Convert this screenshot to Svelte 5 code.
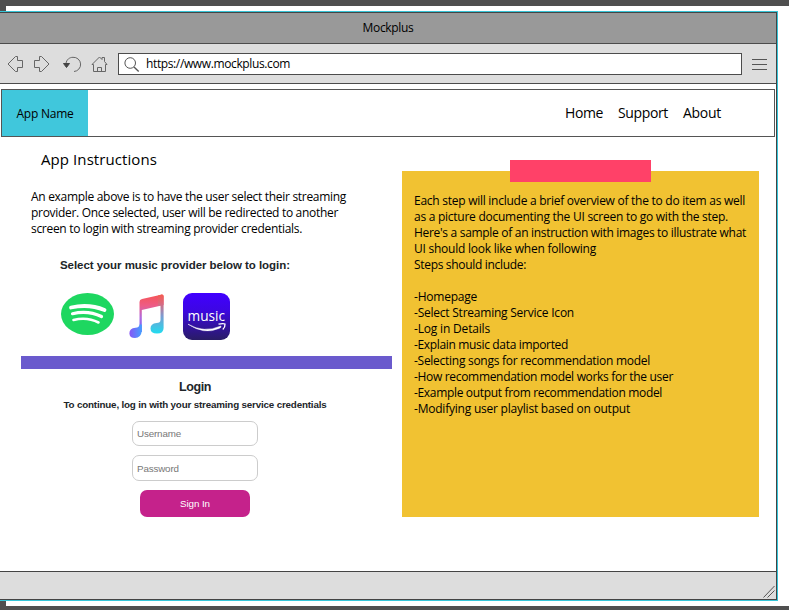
<script>
  const intro = [
    ['An example above is to have the user select their streaming', 315],
    ['provider. Once selected, user will be redirected to another', 307],
    ['screen to login with streaming provider credentials.', 271]
  ];
  const note = [
    ['Each step will include a brief overview of the to do item as well', 331],
    ['as a picture documenting the UI screen to go with the step.', 314],
    ["Here's a sample of an instruction with images to illustrate what", 332],
    ['UI should look like when following', 182],
    ['Steps should include:', 112],
    ['', 0],
    ['-Homepage', 63],
    ['-Select Streaming Service Icon', 160],
    ['-Log in Details', 76],
    ['-Explain music data imported', 154],
    ['-Selecting songs for recommendation model', 236],
    ['-How recommendation model works for the user', 259],
    ['-Example output from recommendation model', 248],
    ['-Modifying user playlist based on output', 216]
  ];

  // Tracks a line of text so that it spans the given width.
  function fit(node, width) {
    const count = node.textContent.length;
    if (!count) return;
    const natural = node.getBoundingClientRect().width;
    node.style.letterSpacing = `${(width - natural) / count}px`;
  }
</script>

<div class="stage">
  <div class="window">
    <header class="title"><span use:fit={51}>Mockplus</span></header>
    <div class="toolbar">
      <svg class="controls" width="118" height="39" viewBox="0 44 118 39" fill="none" stroke="#666" stroke-width="1">
        <path d="M8 64 15.5 56.5H17.5V60.5H22.5V67.5H17.5V71.5H15.5Z" />
        <path d="M49 64 41.5 56.5H39.5V60.5H34.5V67.5H39.5V71.5H41.5Z" />
        <path d="M66 63.5C66.5 59.5 69.5 57.3 73 57.3A7 7 0 0 1 74 71.5" />
        <path d="M63.5 63.5H69.5L66.5 67.5Z" fill="#444" stroke="#444" />
        <path d="M92 64.5 99.5 57 102 59.5V57.5H104.5V61.5L107 64.5H105.5V71.5H93.5V64.5ZM97.5 71.5V67.5H101.5V71.5" />
      </svg>
      <div class="address">
        <svg width="27" height="20" viewBox="0 0 27 20" fill="none" stroke="#555">
          <circle cx="9.2" cy="8" r="5.3" /><path d="M13 12 17.7 16.5" stroke-width="1.4" />
        </svg>
        <span use:fit={144}>https://www.mockplus.com</span>
      </div>
      <div class="menu"><i></i><i></i><i></i></div>
    </div>
    <nav>
      <div class="brand"><span use:fit={57}>App Name</span></div>
      <div class="links">
        <span use:fit={38}>Home</span><span use:fit={50}>Support</span><span use:fit={38}>About</span>
      </div>
    </nav>
    <main>
      <section class="left">
        <h1><span use:fit={116}>App Instructions</span></h1>
        <div class="intro">
          {#each intro as [text, width]}<div class="line"><span use:fit={width}>{text}</span></div>{/each}
        </div>
        <h2><span use:fit={230}>Select your music provider below to login:</span></h2>
        <div class="logos">
          <svg width="53" height="42" viewBox="0 0 53 42">
            <ellipse cx="26.5" cy="21" rx="26.5" ry="21" fill="#1ed760" />
            <g fill="none" stroke="#fff" stroke-linecap="round">
              <path d="M10 14.5Q28 10.5 43.5 17" stroke-width="3.8" />
              <path d="M11.5 20.7Q27 17 40.5 23.5" stroke-width="3.2" />
              <path d="M12.5 27Q26 23.5 37.5 29.5" stroke-width="2.6" />
            </g>
          </svg>
          <svg width="35" height="45" viewBox="0 0 35 45">
            <defs>
              <linearGradient id="note-top" x1="0" y1="0" x2="0" y2="1">
                <stop offset="0" stop-color="#f65455" /><stop offset=".3" stop-color="#ed5c87" />
                <stop offset=".62" stop-color="#b06be0" /><stop offset="1" stop-color="#6164ff" />
              </linearGradient>
              <linearGradient id="note-right" x1="0" y1="0" x2="0" y2="1">
                <stop offset="0" stop-color="#f45b50" /><stop offset=".22" stop-color="#dc687c" />
                <stop offset=".55" stop-color="#7d9bd0" /><stop offset="1" stop-color="#20dcf0" />
              </linearGradient>
              <linearGradient id="note-ball"><stop offset="0" stop-color="#8755f5" /><stop offset="1" stop-color="#43a0ff" /></linearGradient>
            </defs>
            <path d="M10.5 8Q10.5 5.4 13 4.9L32 .7Q34.6.2 34.6 2.3V11L12.8 16V38H10.5Z" fill="url(#note-top)" />
            <path d="M29 1.4 32 .7Q34.6.2 34.6 2.3V34Q34.6 39.5 28 39.5 21.5 39.5 21.5 34.5 21.5 29.5 27.5 29 31.5 28.8 31.5 26V11.5L29 12Z" fill="url(#note-right)" />
            <path d="M12.8 35V37Q12 44 6 44 .6 44 .4 39.5 .2 34.5 6.5 33.8 10.5 33.4 10.5 30.5H12.8Z" fill="url(#note-ball)" />
          </svg>
          <svg width="47" height="47" viewBox="0 0 47 47">
            <defs><linearGradient id="amazon" x1="0" y1="0" x2="0" y2="1">
              <stop offset="0" stop-color="#4100ff" /><stop offset=".35" stop-color="#3d06e5" /><stop offset="1" stop-color="#291c65" />
            </linearGradient></defs>
            <rect width="47" height="47" rx="9" fill="url(#amazon)" />
            <text x="4.5" y="27.5" textLength="37.5" lengthAdjust="spacingAndGlyphs" fill="#fff" font-family="Open Sans, sans-serif" font-size="14" font-weight="500">music</text>
            <path d="M5 31.2Q21 40.5 38 33Q38.5 34.5 36 35.5 21 42 5 31.2Z" fill="#fff" stroke="#fff" stroke-width=".5" />
            <path d="M35.5 31.2Q40 30 42 31 42.3 34 39.8 36.5" fill="none" stroke="#fff" stroke-width="1.3" />
          </svg>
        </div>
        <div class="divider"></div>
        <form class="login" onsubmit={(event) => event.preventDefault()}>
          <h3><span use:fit={32}>Login</span></h3>
          <p><span use:fit={263}>To continue, log in with your streaming service credentials</span></p>
          <input type="text" placeholder="Username" aria-label="Username" />
          <input type="password" placeholder="Password" aria-label="Password" />
          <button><span use:fit={30}>Sign In</span></button>
        </form>
      </section>
      <section class="note">
        <div class="tape"></div>
        {#each note as [text, width]}<div class="line"><span use:fit={width}>{text}</span></div>{/each}
      </section>
    </main>
    <footer>
      <svg width="12" height="13" viewBox="0 0 12 13" stroke="#555" fill="none"><path d="M.5 12.5 11.5 1M4.5 12.5 11.5 5.5" /></svg>
    </footer>
  </div>
</div>

<style>
  * { box-sizing: border-box; }
  span { white-space: pre; }
  .stage {
    width: 789px; height: 610px; padding-top: 5px; overflow: hidden;
    border-top: 6px solid #4f4f4f; border-bottom: 4px solid #4f4f4f;
    background: linear-gradient(#4f4f4f, #4f4f4f) 0 0 / 6px 100% no-repeat, #fff;
    font: 12px/16px "Open Sans", "Noto Sans", sans-serif; color: #000;
  }
  .window {
    width: 778px; height: 590px; display: flex; flex-direction: column; background: #fff;
    border: 1px solid #35c4d7; border-left: 0; box-shadow: inset -1px 0 #444, inset 0 1px #444, inset 0 -1px #444;
    padding: 1px 1px 1px 0;
  }
  .title { height: 31px; flex: none; background: #999; border-bottom: 1px solid #4c4c4c; display: flex; align-items: center; justify-content: center; }
  .toolbar { height: 40px; flex: none; background: #ddd; border-bottom: 1px solid #4c4c4c; display: flex; align-items: flex-start; }
  .address { width: 624px; height: 22px; margin-top: 9px; border: 1px solid #4c4c4c; background: #fff; display: flex; }
  .address span { line-height: 19px; }
  .address svg { margin: 1px 0 0 2px; flex: none; margin-right: -2px; }
  .menu { width: 15px; margin: 15px 0 0 10px; display: flex; flex-direction: column; gap: 4px; }
  .menu i { height: 1px; background: #555; }
  nav { width: 774px; height: 48px; flex: none; margin: 5px 0 0 1px; border: 1px solid #555; display: flex; }
  .brand { width: 86px; background: #40c7dc; display: flex; align-items: center; justify-content: center; padding-top: 2px; }
  .links { margin-left: auto; margin-right: 53px; display: flex; align-items: center; gap: 15px; font-size: 14px; }
  main { flex: 1; min-height: 0; display: flex; align-items: flex-start; }
  .left { width: 371px; margin-left: 21px; flex: none; }
  h1, h2, h3, p { margin: 0; font-weight: 400; }
  h1 { font-size: 15px; line-height: 20px; padding: 12px 0 0 20px; }
  .intro { padding: 20px 0 0 10px; }
  .line { height: 16px; line-height: 16px; }
  h2 { font: bold 11.5px/14px "Liberation Sans", Arial, sans-serif; color: #212529; padding: 21px 0 0 39px; }
  .logos { height: 84px; padding: 21px 0 0 40px; display: flex; align-items: flex-start; }
  .logos svg:nth-child(2) { margin-left: 15px; margin-top: 1px; }
  .logos svg:nth-child(3) { margin-left: 19px; }
  .divider { height: 13px; background: #6a5acd; }
  .login { display: flex; flex-direction: column; align-items: center; font-family: "Liberation Sans", Arial, sans-serif; color: #212529; padding-right: 23px; }
  h3 { font-size: 12.5px; font-weight: bold; line-height: 14px; margin-top: 11px; }
  p { font-size: 9.8px; font-weight: bold; line-height: 12px; margin-top: 5px; }
  input {
    width: 126px; height: 25px; margin: 10px 0 0; padding: 0 4px; border: 1px solid #ccc; border-radius: 7px;
    font: 9.8px "Liberation Sans", Arial, sans-serif; letter-spacing: -0.15px; background: #fff;
  }
  input + input { height: 26px; margin-top: 9px; }
  input::placeholder { color: #777; opacity: 1; }
  button { width: 110px; height: 27px; margin: 9px 0 0; padding: 0 0 1px; border: 0; border-radius: 7px; background: #c5228b; color: #fff; font: 9.8px "Liberation Sans", Arial, sans-serif; }
  .note { position: relative; width: 357px; height: 346px; margin: 34px 0 0 10px; padding: 22px 0 0 12px; background: #f1c232; }
  .tape { position: absolute; left: 108px; top: -11px; width: 141px; height: 22px; background: #ff4168; }
  footer { height: 28px; flex: none; border-top: 1px solid #444; background: #ddd; display: flex; justify-content: flex-end; align-items: flex-end; padding: 0 1px 1px 0; }
  footer svg { display: block; }
</style>
